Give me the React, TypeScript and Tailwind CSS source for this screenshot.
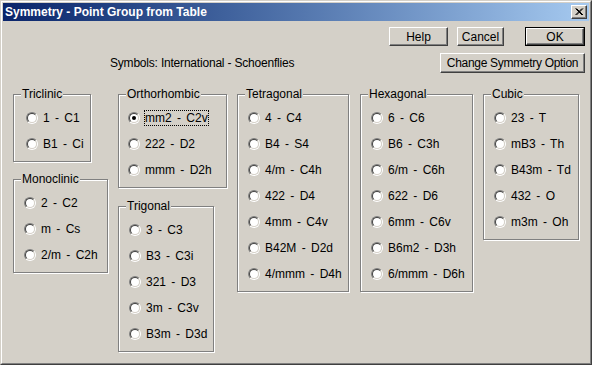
import React from "react";

type Item = { label: string; checked?: boolean; focus?: boolean };

const Radio = ({ item }: { item: Item }) => {
  return (
    <div className="flex h-[26px] items-center">
      <span className="block h-[12px] w-[12px] shrink-0 rounded-full border border-t-[#808080] border-l-[#808080] border-b-white border-r-white">
        <span className="flex h-full w-full items-center justify-center rounded-full border border-t-[#404040] border-l-[#404040] border-b-[#d4d0c8] border-r-[#d4d0c8] bg-white">
          {item.checked && <span className="block h-[4px] w-[4px] rounded-full bg-black" />}
        </span>
      </span>
      {item.focus ? (
        <span className="ml-[4px] border border-dotted border-black leading-[14px] [word-spacing:2px]">{item.label}</span>
      ) : (
        <span className="ml-[5px] leading-[14px] [word-spacing:2px]">{item.label}</span>
      )}
    </div>
  );
};

const Group = ({ title, items, className }: { title: string; items: Item[]; className: string }) => {
  return (
    <div
      className={
        "relative border border-[#808080] pt-[10px] pb-[4px] shadow-[1px_1px_0_#fff,inset_1px_1px_0_#fff] " +
        className
      }
    >
      <span className="absolute -top-[8px] left-[7px] bg-[#d4d0c8] px-[1px] leading-[14px]">{title}</span>
      {items.map((it) => (
        <Radio key={it.label} item={it} />
      ))}
    </div>
  );
};

const Button = ({ label, className, isDefault }: { label: string; className: string; isDefault?: boolean }) => {
  const inner = (
    <div className="flex h-full w-full items-center justify-center border border-t-white border-l-white border-b-[#404040] border-r-[#404040] shadow-[inset_-1px_-1px_0_#808080]">
      {label}
    </div>
  );
  if (isDefault) {
    return <div className={"border border-black " + className}>{inner}</div>;
  }
  return <div className={className}>{inner}</div>;
};

const t = (s: string[]): Item[] => s.map((label) => ({ label }));

export default function App() {
  return (
    <div className="h-[365px] w-[592px] overflow-hidden bg-[#d4d0c8] font-['Liberation_Sans',Arial,sans-serif] text-[12px] text-black">
      <div className="h-full w-full border border-t-[#d4d0c8] border-l-[#d4d0c8] border-b-[#404040] border-r-[#404040]">
        <div className="flex h-full w-full flex-col border border-t-white border-l-white border-b-[#808080] border-r-[#808080] p-[1px]">
          {/* title bar */}
          <div className="flex h-[18px] shrink-0 items-center bg-gradient-to-r from-[#0a246a] to-[#a6caf0] pl-[2px] pr-[2px]">
            <span className="text-[12px] font-bold leading-none text-white">Symmetry - Point Group from Table</span>
            <div className="ml-auto h-[14px] w-[16px] border border-t-white border-l-white border-b-[#404040] border-r-[#404040] bg-[#d4d0c8] shadow-[inset_-1px_-1px_0_#808080]">
              <svg width="14" height="12" viewBox="0 0 14 12" className="block">
                <path d="M3.5 2.5 L10 9 M4.5 2.5 L11 9 M10 2.5 L3.5 9 M11 2.5 L4.5 9" stroke="#000" strokeWidth="1" />
              </svg>
            </div>
          </div>

          {/* buttons */}
          <div className="mt-[6px] flex pr-[4px]">
            <div className="ml-auto flex">
              <Button label="Help" className="h-[19px] w-[59px]" />
              <Button label="Cancel" className="ml-[9px] h-[19px] w-[47px]" />
              <Button label="OK" className="ml-[21px] h-[19px] w-[60px]" isDefault />
            </div>
          </div>
          <div className="mt-[7px] flex items-center pr-[4px]">
            <span className="ml-[107px] tracking-[-0.2px]">Symbols: International - Schoenflies</span>
            <Button label="Change Symmetry Option" className="ml-auto h-[20px] w-[145px] tracking-[-0.3px]" />
          </div>

          {/* groups */}
          <div className="mt-[21px] flex items-start gap-[10px] pl-[10px]">
            <div className="flex flex-col items-start gap-[17px]">
              <Group title="Triclinic" className="w-[78px] pl-[12px]" items={t(["1 - C1", "B1 - Ci"])} />
              <Group title="Monoclinic" className="w-[95px] pl-[10px]" items={t(["2 - C2", "m - Cs", "2/m - C2h"])} />
            </div>
            <div className="flex flex-col items-start gap-[18px]">
              <Group
                title="Orthorhombic"
                className="w-[109px] pl-[9px]"
                items={[{ label: "mm2 - C2v", checked: true, focus: true }, { label: "222 - D2" }, { label: "mmm - D2h" }]}
              />
              <Group
                title="Trigonal"
                className="w-[96px] pl-[10px]"
                items={t(["3 - C3", "B3 - C3i", "321 - D3", "3m - C3v", "B3m - D3d"])}
              />
            </div>
            <Group
              title="Tetragonal"
              className="w-[112px] pl-[10px]"
              items={t(["4 - C4", "B4 - S4", "4/m - C4h", "422 - D4", "4mm - C4v", "B42M - D2d", "4/mmm - D4h"])}
            />
            <Group
              title="Hexagonal"
              className="ml-[1px] w-[113px] pl-[10px]"
              items={t(["6 - C6", "B6 - C3h", "6/m - C6h", "622 - D6", "6mm - C6v", "B6m2 - D3h", "6/mmm - D6h"])}
            />
            <Group
              title="Cubic"
              className="w-[96px] pl-[10px]"
              items={t(["23 - T", "mB3 - Th", "B43m - Td", "432 - O", "m3m - Oh"])}
            />
          </div>
        </div>
      </div>
    </div>
  );
}
